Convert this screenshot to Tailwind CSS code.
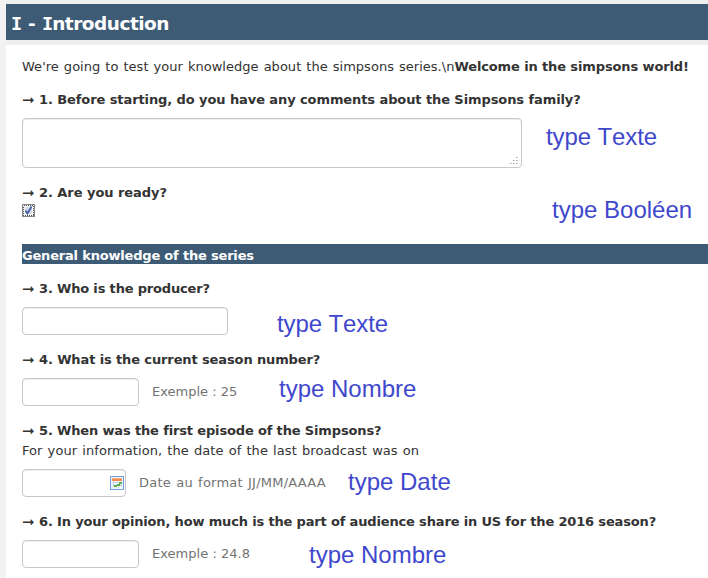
<!DOCTYPE html>
<html lang="en">
<head>
<meta charset="utf-8">
<title>I - Introduction</title>
<script src="https://cdn.jsdelivr.net/npm/@tailwindcss/browser@4"></script>
</head>
<body class="w-[708px] h-[578px] overflow-hidden bg-[#f2f2f2] pl-1.5 font-['DejaVu_Sans',sans-serif] text-[13px] leading-5 text-[#333333]">
<div class="h-[578px] flex flex-col bg-[#eeeeee] pt-1">
  <h1 class="h-9 shrink-0 bg-[#3e5b76] pl-[5px] pt-0.5 text-white font-bold text-[18.5px] leading-9 whitespace-nowrap"><span class="tracking-[-0.5px]"><span class="font-['DejaVu_Sans_Mono',monospace] tracking-[-1px]">I</span><span class="[word-spacing:0.9px]"> - </span><span class="font-['DejaVu_Sans_Mono',monospace] tracking-[-1px]">I</span>ntroduction</span></h1>
  <main class="mt-[5px] flex-1 bg-white pl-4 pt-[11px] whitespace-nowrap">
    <p class="h-5 leading-[22px]"><span class="tracking-[0.02px] [word-spacing:0.9px]">We're going to test your knowledge about the simpsons series.\n</span><b class="tracking-[-0.12px]">Welcome in the simpsons world!</b></p>

    <section class="mt-[13px]">
      <h2 class="flex h-5 font-bold leading-[22px]"><span class="w-[17px] text-[15px]">➞</span><span class="tracking-[-0.09px]">1. Before starting, do you have any comments about the Simpsons family?</span></h2>
      <div class="mt-[9px] flex h-[50px]">
        <div class="w-[500px] h-[50px] flex items-end justify-end rounded-[4px] border border-[#c8c8c8] bg-white shadow-[inset_0_1px_1px_rgba(0,0,0,0.075)]">
          <svg class="mr-[3px] mb-[2px]" width="8" height="8" viewBox="0 0 8 8" fill="#999999" shape-rendering="crispEdges"><path d="M6 0h1v1h-1zM3 3h1v1h-1zM6 3h1v1h-1zM0 6h1v1h-1zM3 6h1v1h-1zM6 6h1v1h-1z"/><path fill="#d4d4d4" d="M7 0h1v1h-1zM4 3h1v1h-1zM7 3h1v1h-1zM1 6h1v1h-1zM4 6h1v1h-1zM7 6h1v1h-1z"/></svg>
        </div>
        <span class="ml-6 mt-[5px] font-['Liberation_Sans',sans-serif] text-[24px] leading-7 tracking-[-0.1px] text-[#3f48cc] [font-kerning:none]">type Texte</span>
      </div>
    </section>

    <section class="mt-[14px] flex h-[62px]">
      <div class="w-[530px]">
        <h2 class="flex h-5 font-bold leading-[22px]"><span class="w-[17px] text-[15px]">➞</span><span class="tracking-[-0.05px]">2. Are you ready?</span></h2>
        <svg class="mt-[2px]" width="13" height="13" viewBox="0 0 13 13"><path fill="#e8e8ea" d="M0 0h13v13H0z"/><rect x=".5" y=".5" width="12" height="12" fill="none" stroke="#888"/><rect x="1.5" y="1.5" width="10" height="10" fill="#f4f4f4" stroke="#555" stroke-dasharray="1 1" shape-rendering="crispEdges"/><path fill="#d5dae4" d="M3 3h7v7H3z"/><path d="M3.5 6.5 5.5 9.5 9.5 2.5" fill="none" stroke="#4860a8" stroke-width="1.8"/></svg>
      </div>
      <span class="mt-[14px] font-['Liberation_Sans',sans-serif] text-[24px] leading-7 text-[#3f48cc] [font-kerning:none]">type Booléen</span>
    </section>

    <h2 class="h-5 bg-[#3e5b76] text-white font-bold leading-[23px]"><span class="tracking-[-0.19px]">General knowledge of the series</span></h2>

    <section class="mt-[14px]">
      <h2 class="flex h-5 font-bold leading-[22px]"><span class="w-[17px] text-[15px]">➞</span><span class="tracking-[-0.17px]">3. Who is the producer?</span></h2>
      <div class="mt-[9px] flex h-7">
        <div class="w-[206px] h-7 rounded-[4px] border border-[#c8c8c8] bg-white shadow-[inset_0_1px_1px_rgba(0,0,0,0.075)]"></div>
        <span class="ml-[49px] mt-[3px] font-['Liberation_Sans',sans-serif] text-[24px] leading-7 tracking-[-0.1px] text-[#3f48cc] [font-kerning:none]">type Texte</span>
      </div>
    </section>

    <section class="mt-[14px]">
      <h2 class="flex h-5 font-bold leading-[22px]"><span class="w-[17px] text-[15px]">➞</span><span class="tracking-[-0.12px]">4. What is the current season number?</span></h2>
      <div class="mt-[9px] flex h-7">
        <div class="w-[117px] h-7 rounded-[4px] border border-[#c8c8c8] bg-white shadow-[inset_0_1px_1px_rgba(0,0,0,0.075)]"></div>
        <span class="ml-[13px] w-[127px] leading-7 text-[#737373]">Exemple : 25</span>
        <span class="-mt-[3px] font-['Liberation_Sans',sans-serif] text-[24px] leading-7 text-[#3f48cc] [font-kerning:none]">type Nombre</span>
      </div>
    </section>

    <section class="mt-[14px]">
      <h2 class="flex h-5 font-bold leading-[22px]"><span class="w-[17px] text-[15px]">➞</span><span class="tracking-[-0.15px]">5. When was the first episode of the Simpsons?</span></h2>
      <p class="h-5 leading-[22px]"><span class="tracking-[0.07px] [word-spacing:0.9px]">For your information, the date of the last broadcast was on</span></p>
      <div class="mt-[9px] flex h-7">
        <div class="w-[104px] h-7 flex items-center justify-end rounded-[4px] border border-[#c8c8c8] bg-white pr-px shadow-[inset_0_1px_1px_rgba(0,0,0,0.075)]">
          <svg width="14" height="14" viewBox="0 0 14 14" shape-rendering="crispEdges"><path fill="#6f9fdc" d="M0 0h14v14H0z"/><path fill="#edf4fc" d="M1 1h12v12H1z"/><path fill="#f58a50" d="M2 2h10v3H2z"/><path fill="#f7ad78" d="M2 2h10v1H2z"/><path fill="#a9bdd4" d="M3 6h2v1H3zM6 6h2v1H6zM3 8h1v2H3zM6 9h2v1H6zM10 9h2v1h-2zM8 11h1v1H8z"/><path fill="#55ab4a" d="M9 6h3v2H9zM7 8h3v2H7zM4 9h3v2H4z"/><path fill="#fff" d="M10 11h3v2h-3z"/></svg>
        </div>
        <span class="ml-[13px] w-[209px] leading-7 tracking-[0.22px] [word-spacing:0.9px] text-[#737373]">Date au format JJ/MM/AAAA</span>
        <span class="-mt-px font-['Liberation_Sans',sans-serif] text-[24px] leading-7 text-[#3f48cc] [font-kerning:none]">type Date</span>
      </div>
    </section>

    <section class="mt-[14px]">
      <h2 class="flex h-5 font-bold leading-[22px]"><span class="w-[17px] text-[15px]">➞</span><span class="tracking-[-0.16px]">6. In your opinion, how much is the part of audience share in US for the 2016 season?</span></h2>
      <div class="mt-[9px] flex h-7">
        <div class="w-[117px] h-7 rounded-[4px] border border-[#c8c8c8] bg-white shadow-[inset_0_1px_1px_rgba(0,0,0,0.075)]"></div>
        <span class="ml-[13px] w-[157px] leading-7 tracking-[0.03px] text-[#737373]">Exemple : 24.8</span>
        <span class="mt-px font-['Liberation_Sans',sans-serif] text-[24px] leading-7 text-[#3f48cc] [font-kerning:none]">type Nombre</span>
      </div>
    </section>
  </main>
</div>
</body>
</html>
